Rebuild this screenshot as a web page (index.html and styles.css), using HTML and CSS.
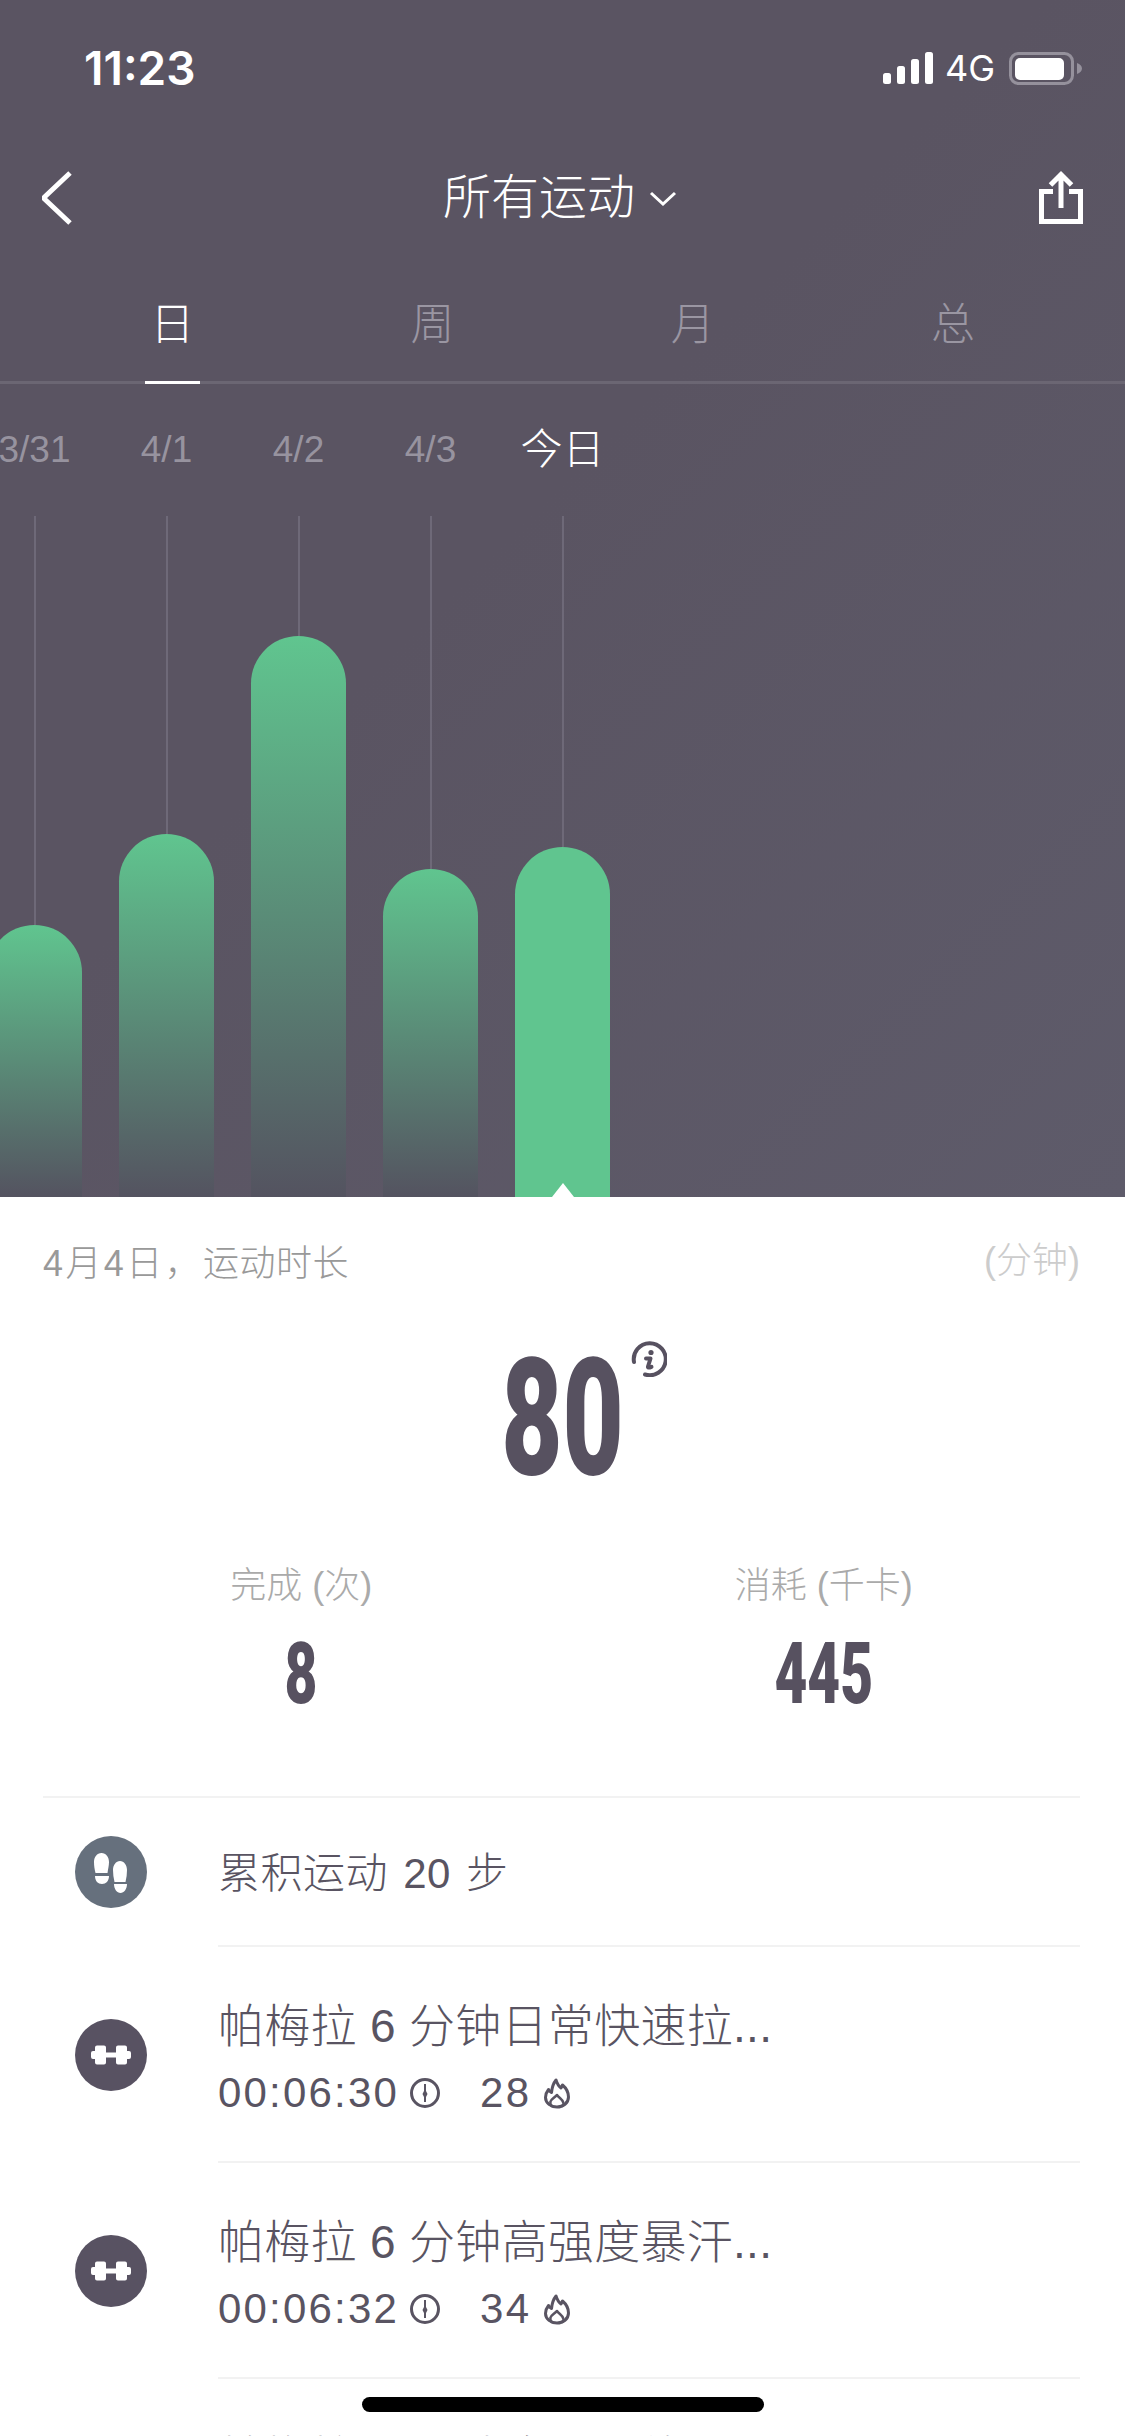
FILE: index.html
```html
<!DOCTYPE html>
<html lang="zh">
<head>
<meta charset="utf-8">
<title>所有运动</title>
<link rel="stylesheet" href="styles.css">
</head>
<body>
<div class="screen">
  <section class="dark">
    <header class="status">
      <span class="time">11:23</span>
      <div class="status-right">
        <svg class="signal" viewBox="0 0 50 32"><rect x="0" y="21" width="8" height="11" rx="2.5"/><rect x="14" y="14" width="8" height="18" rx="2.5"/><rect x="28" y="7" width="8" height="25" rx="2.5"/><rect x="42" y="0" width="8" height="32" rx="2.5"/></svg>
        <span class="net">4G</span>
        <svg class="battery" viewBox="0 0 73 33"><rect class="batt-shell" x="1.5" y="1.5" width="62" height="30" rx="8"/><rect class="batt-fill" x="6" y="6" width="49" height="22" rx="5"/><path class="batt-cap" d="M68 11c3 1 5 3 5 5.500s-2 4.500-5 5.500z"/></svg>
      </div>
    </header>
    <nav class="nav">
      <svg class="nav-icon" viewBox="0 0 44 56"><path d="M28 3 1.500 28 28 53"/></svg>
      <div class="nav-title"><span>所有运动</span><svg class="caret" viewBox="0 0 28 15"><path d="M2 2l12 11L26 2"/></svg></div>
      <svg class="nav-icon" viewBox="0 -2 44 56"><path d="M14 19.500H2.500v30h39v-30H30M22 36V3M11.500 13 22 2.500 32.500 13"/></svg>
    </nav>
    <div class="tabs">
      <div class="tab active">日</div>
      <div class="tab">周</div>
      <div class="tab">月</div>
      <div class="tab">总</div>
    </div>
    <div class="cols dates">
      <div class="date">3/31</div>
      <div class="date">4/1</div>
      <div class="date">4/2</div>
      <div class="date">4/3</div>
      <div class="date today">今日</div>
    </div>
    <div class="cols chart">
      <div class="col"><i class="stem"></i><div class="bar" style="height:272px"></div></div>
      <div class="col"><i class="stem"></i><div class="bar" style="height:363px"></div></div>
      <div class="col"><i class="stem"></i><div class="bar" style="height:561px"></div></div>
      <div class="col"><i class="stem"></i><div class="bar" style="height:328px"></div></div>
      <div class="col"><i class="stem"></i><div class="bar current" style="height:350px"></div></div>
    </div>
  </section>
  <section class="panel">
    <div class="head">
      <span class="head-date"><span class="head-day">4月4日&#xFF0C;</span><span class="head-metric">运动时长</span></span>
      <span class="head-unit">(分钟)</span>
    </div>
    <div class="big-wrap">
      <div class="big">80</div>
      <svg class="info" viewBox="0 0 36 36"><path class="info-ring" d="M3 21A16 16 0 1 1 14 33.500"/><circle class="info-dot" cx="20" cy="11.500" r="2.600"/><path class="info-i" d="M15 17.500h4.500l-2.500 8c-.3 1.300.8 1.500 3.500.3"/></svg>
    </div>
    <div class="stats">
      <div class="stat"><div class="stat-label">完成 (次)</div><div class="stat-value"><span>8</span></div></div>
      <div class="stat"><div class="stat-label">消耗 (千卡)</div><div class="stat-value"><span>445</span></div></div>
    </div>
    <ul class="list">
      <li class="row row-first">
        <svg class="badge badge-steps" viewBox="0 0 72 72"><circle cx="36" cy="36" r="36"/><path class="glyph" d="M19 26c0-5 3-9 7.500-9s7.500 4 7.500 9c0 4-1 7-1.500 11H20.500C19.500 33 19 30 19 26zM20 40h14c0 5-3 8-7 8s-7-3-7-8zM38 34c0-5 3-9 7-9s7 4 7 9c0 4-.5 8-1.500 12H39.500C38.500 42 38 38 38 34zM39 48h13c0 5-3 9-6.500 9S39 53 39 48z"/></svg>
        <div class="row-body"><div class="row-text">累积运动 20 步</div></div>
      </li>
      <li class="row">
        <svg class="badge badge-dumb" viewBox="0 0 72 72"><circle cx="36" cy="36" r="36"/><path class="glyph" d="M22 26.500h7a2 2 0 0 1 2 2v5h10v-5a2 2 0 0 1 2-2h7a2 2 0 0 1 2 2v3.500h2a2 2 0 0 1 2 2v4a2 2 0 0 1-2 2h-2v3.500a2 2 0 0 1-2 2h-7a2 2 0 0 1-2-2v-5H31v5a2 2 0 0 1-2 2h-7a2 2 0 0 1-2-2v-3.500h-2a2 2 0 0 1-2-2v-4a2 2 0 0 1 2-2h2v-3.500a2 2 0 0 1 2-2z"/></svg>
        <div class="row-body">
          <div class="row-title">帕梅拉 6 分钟日常快速拉...</div>
          <div class="row-sub">
            <span>00:06:30</span>
            <svg class="clock" viewBox="0 0 30 32"><circle cx="15" cy="16" r="13.500"/><path class="clock-hand" d="M15 12l2.500 5-2.500 5-2.500-5z"/><path class="clock-pin" d="M15 7v18"/></svg>
            <span class="kcal">28</span>
            <svg class="flame" viewBox="0 0 28 31"><path d="M13 2c1 3 2 6 5 8 .5-1 1-2 1.500-3 3.500 3 6 7 6 12 0 6-5.500 10-11.500 10S2.500 25 2.500 19.500c0-3 1-5.500 3-8 .5 1.500 1.500 2.500 3 3C9 10 10.500 5 13 2z"/><path class="flame-inner" d="M8.500 28c-1-1.500-1.500-3-1-4.500.6-2 3.500-3.500 6.500-6.500 2 3 6 4.500 6.500 8 .2 1.200-.3 2.200-1 3"/></svg>
          </div>
        </div>
      </li>
      <li class="row">
        <svg class="badge badge-dumb" viewBox="0 0 72 72"><circle cx="36" cy="36" r="36"/><path class="glyph" d="M22 26.500h7a2 2 0 0 1 2 2v5h10v-5a2 2 0 0 1 2-2h7a2 2 0 0 1 2 2v3.500h2a2 2 0 0 1 2 2v4a2 2 0 0 1-2 2h-2v3.500a2 2 0 0 1-2 2h-7a2 2 0 0 1-2-2v-5H31v5a2 2 0 0 1-2 2h-7a2 2 0 0 1-2-2v-3.500h-2a2 2 0 0 1-2-2v-4a2 2 0 0 1 2-2h2v-3.500a2 2 0 0 1 2-2z"/></svg>
        <div class="row-body">
          <div class="row-title">帕梅拉 6 分钟高强度暴汗...</div>
          <div class="row-sub">
            <span>00:06:32</span>
            <svg class="clock" viewBox="0 0 30 32"><circle cx="15" cy="16" r="13.500"/><path class="clock-hand" d="M15 12l2.500 5-2.500 5-2.500-5z"/><path class="clock-pin" d="M15 7v18"/></svg>
            <span class="kcal">34</span>
            <svg class="flame" viewBox="0 0 28 31"><path d="M13 2c1 3 2 6 5 8 .5-1 1-2 1.500-3 3.500 3 6 7 6 12 0 6-5.500 10-11.500 10S2.500 25 2.500 19.500c0-3 1-5.500 3-8 .5 1.500 1.500 2.500 3 3C9 10 10.500 5 13 2z"/><path class="flame-inner" d="M8.500 28c-1-1.500-1.500-3-1-4.500.6-2 3.500-3.500 6.500-6.500 2 3 6 4.500 6.500 8 .2 1.200-.3 2.200-1 3"/></svg>
          </div>
        </div>
      </li>
      <li class="row">
        <span class="badge"></span>
        <div class="row-body"><div class="row-title">帕梅拉 6 分钟腹肌训练</div></div>
      </li>
    </ul>
  </section>
  <div class="home-bar"></div>
</div>
</body>
</html>
```
FILE: styles.css
```css
* { box-sizing: border-box; }
html, body { margin: 0; padding: 0; background: #fff; }
body { width: 1125px; height: 2436px; overflow: hidden; font-family: "Liberation Sans", "Noto Sans CJK SC", sans-serif; }
.screen { position: relative; width: 1125px; height: 2436px; overflow: hidden; }

.dark { height: 1197px; background: linear-gradient(135deg, #5a5462 0%, #5a5462 45%, #5e5b6a 100%); color: #fff; overflow: hidden; }

.status { height: 136px; display: flex; align-items: center; justify-content: space-between; padding: 0 43px 0 84px; }
.time { font-family: Inter, "Liberation Sans", sans-serif; font-size: 46px; font-weight: 600; }
.status-right { display: flex; align-items: center; gap: 15px; }
.signal { width: 50px; height: 32px; fill: #fff; }
.net { font-family: Inter, "Liberation Sans", sans-serif; font-size: 36px; font-weight: 400; width: 46px; margin-left: -3px; margin-right: 3px; }
.battery { width: 73px; height: 33px; }
.batt-shell { fill: none; stroke: #95919c; stroke-width: 3; }
.batt-fill { fill: #fff; }
.batt-cap { fill: #95919c; }

.nav { height: 124px; display: flex; align-items: center; justify-content: space-between; padding: 0 42px; }
.nav-icon { width: 44px; height: 56px; fill: none; stroke: #fff; stroke-width: 5; stroke-linejoin: miter; }
.nav-title { display: flex; align-items: center; gap: 14px; font-size: 48px; font-weight: 300; line-height: 60px; margin-right: 5px; }
.caret { width: 28px; height: 15px; fill: none; stroke: #fff; stroke-width: 3; }

.tabs { display: grid; grid-template-columns: repeat(4, 1fr); padding: 40px 42px 0; height: 124px; border-bottom: 3px solid #6b6673; }
.tab { position: relative; height: 84px; line-height: 50px; text-align: center; font-size: 44px; font-weight: 300; color: #9a96a2; }
.tab.active { color: #fff; }
.tab.active::after { content: ""; position: absolute; left: 50%; bottom: 0; width: 55px; height: 3px; margin-left: -27px; background: #fff; }

.cols { display: flex; gap: 37px; margin-left: -13px; }
.dates { height: 132px; align-items: center; }
.date { width: 95px; flex: none; text-align: center; font-size: 37px; line-height: 50px; color: #97939f; white-space: nowrap; }
.date.today { font-size: 42px; line-height: 46px; font-weight: 300; color: #fff; }

.chart { height: 681px; align-items: stretch; }
.col { width: 95px; flex: none; display: flex; flex-direction: column; align-items: center; }
.stem { flex: 1; width: 2px; background: #6e6978; }
.bar { position: relative; width: 95px; flex: none; border-radius: 48px 48px 0 0; background: linear-gradient(180deg, #60c58f 0%, rgba(84, 83, 96, 1) 100%); }
.bar.current { background: #60c58f; }
.bar.current::after { content: ""; position: absolute; left: 50%; bottom: 0; margin-left: -11px; border-left: 11px solid transparent; border-right: 11px solid transparent; border-bottom: 14px solid #fff; }

.panel { background: #fff; }
.head { display: flex; justify-content: space-between; align-items: flex-start; padding: 45px 45px 0 43px; }
.head-date { font-size: 36px; line-height: 44px; color: #999; font-weight: 300; }
.head-day { letter-spacing: 2.400px; }
.head-metric { letter-spacing: 0.500px; }
.head-unit { font-size: 36px; line-height: 44px; margin-top: -3px; color: #ccc; font-weight: 300; }

.big-wrap { position: relative; height: 172px; margin-top: 43px; text-align: center; }
.big { font-family: Roboto, sans-serif; font-weight: 900; font-size: 164px; line-height: 178px; color: #575160; transform: scaleX(0.645); transform-origin: 50% 50%; }
.info { position: absolute; left: 631px; top: 12px; width: 36px; height: 36px; fill: none; }
.info-ring { stroke: #575160; stroke-width: 4; stroke-linecap: round; }
.info-dot { fill: #575160; }
.info-i { stroke: #575160; stroke-width: 4; fill: none; stroke-linecap: round; stroke-linejoin: round; }

.stats { display: grid; grid-template-columns: 1fr 1fr; padding: 0 40px; margin-top: 60px; }
.stat { text-align: center; }
.stat-label { font-size: 36px; line-height: 50px; color: #aaa; font-weight: 300; }
.stat-value { margin-top: 20px; height: 86px; font-family: Roboto, sans-serif; font-weight: 900; font-size: 86px; line-height: 86px; color: #575160; }
.stat-value span { display: inline-block; transform: scaleX(0.66); transform-origin: 50% 50%; }

.list { list-style: none; margin: 79px 45px 0 43px; padding: 0; border-top: 2px solid #f2f2f2; }
.row { display: flex; height: 216px; padding-left: 32px; }
.row-first { height: 149px; }
.badge { flex: none; display: block; width: 72px; height: 72px; margin-top: 72px; margin-right: 71px; }
.row-first .badge { margin-top: 38px; }
.badge-steps { fill: #66707d; }
.badge-dumb { fill: #585262; }
.glyph { fill: #fff; }
.row-body { flex: 1; min-width: 0; border-bottom: 2px solid #f2f2f2; padding-top: 45px; color: #595462; }
.row-first .row-body { padding-top: 51px; }
.row-text { font-size: 42px; line-height: 50px; font-weight: 300; letter-spacing: 0.500px; word-spacing: 3px; }
.row-title { font-size: 46px; line-height: 68px; font-weight: 300; white-space: nowrap; letter-spacing: 0.300px; }
.row-sub { display: flex; align-items: center; height: 66px; font-size: 42px; letter-spacing: 2.200px; font-weight: 400; }
.clock { width: 30px; height: 32px; margin-left: 11px; fill: none; stroke: #595462; stroke-width: 3; }
.clock-hand { fill: #595462; stroke: none; }
.clock-pin { stroke-width: 2; }
.kcal { margin-left: 40px; }
.flame { width: 28px; height: 31px; margin-left: 12px; fill: none; stroke: #595462; stroke-width: 3; stroke-linejoin: round; stroke-linecap: round; }
.flame-inner { stroke-width: 2.500; }

.home-bar { position: absolute; left: 362px; top: 2397px; width: 402px; height: 15px; border-radius: 8px; background: #000; }
```
